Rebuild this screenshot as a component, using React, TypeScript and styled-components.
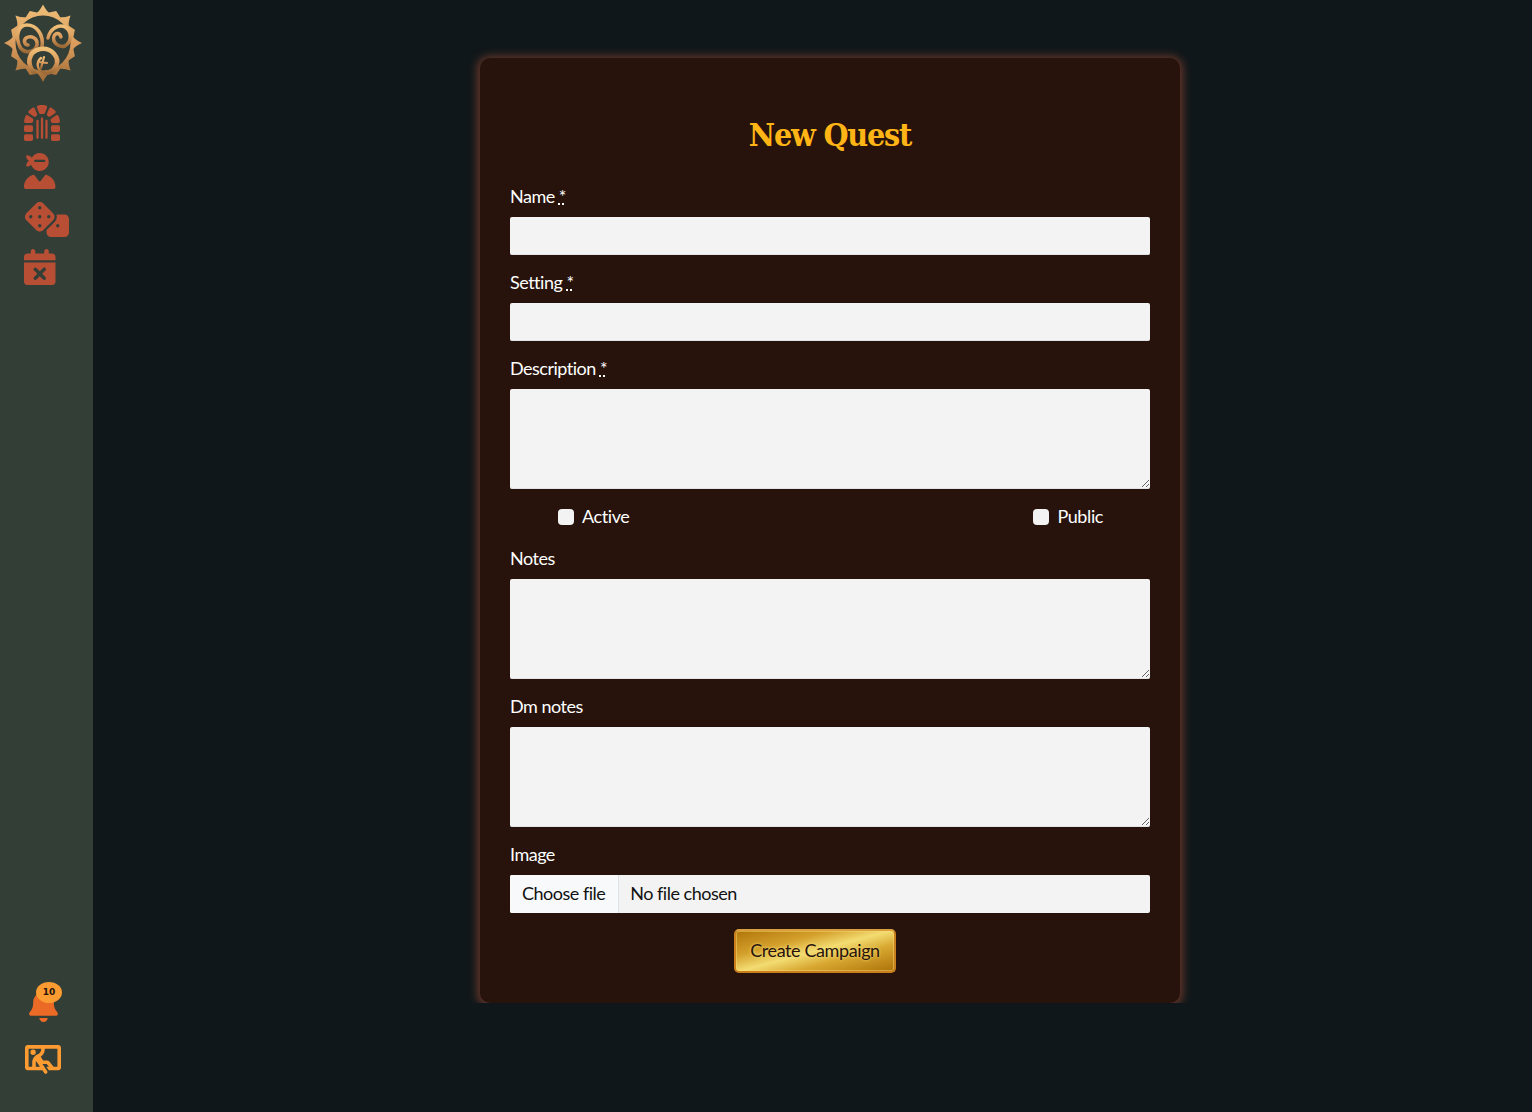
import React from 'react'
import styled, { createGlobalStyle } from 'styled-components'
import { FaBell, FaCalendarXmark, FaDice, FaDungeon, FaPersonThroughWindow, FaUserNinja } from 'react-icons/fa6'

const GlobalStyle = createGlobalStyle`
  html, body {
    margin: 0;
    padding: 0;
    background: #10171a;
    font-family: Lato, "Open Sans", sans-serif;
  }
  * {
    box-sizing: border-box;
  }
`

const Shell = styled.div`
  display: flex;
  height: 1112px;
  overflow: hidden;
`

const Sidebar = styled.nav`
  flex: 0 0 93px;
  display: flex;
  flex-direction: column;
  justify-content: space-between;
  background: #333e37;
  padding-bottom: 38px;
`

const SideTop = styled.div`
  display: flex;
  flex-direction: column;
`

const LogoMark = styled.svg`
  display: block;
  width: 85px;
  height: 85px;
  margin-bottom: 20px;
`

const IconStack = styled.div`
  display: flex;
  flex-direction: column;
  align-items: flex-start;
  gap: 12px;
  padding-left: 24px;
  color: #b84f35;
`

const DungeonIcon = styled(FaDungeon)`
  display: block;
  width: 36px;
  height: 36px;
`

const NinjaIcon = styled(FaUserNinja)`
  display: block;
  width: 31.5px;
  height: 36px;
`

const DiceIcon = styled(FaDice)`
  display: block;
  width: 45px;
  height: 36px;
`

const CalendarIcon = styled(FaCalendarXmark)`
  display: block;
  width: 31.5px;
  height: 36px;
`

const SideBottom = styled.div`
  display: flex;
  flex-direction: column;
  align-items: flex-start;
  padding-left: 25px;
  gap: 23px;
  color: #fb9b32;
`

const BellWrap = styled.div`
  position: relative;
  margin-left: 4px;
  height: 33px;
  color: #ea6a26;

  svg {
    display: block;
    width: 29px;
    height: 33px;
  }
`

const Badge = styled.span`
  position: absolute;
  left: 7px;
  top: -7px;
  width: 26px;
  height: 21px;
  border-radius: 50%;
  background: #fb9b32;
  color: #28120b;
  font: 700 9px/21px "DejaVu Sans", sans-serif;
  text-align: center;
`

const WindowIcon = styled(FaPersonThroughWindow)`
  display: block;
  width: 36px;
  height: 29px;
`

const Main = styled.main`
  flex: 1;
  display: flex;
  align-items: flex-start;
  padding-left: 367px;
`

const CardClip = styled.div`
  overflow: hidden;
  padding: 58px 20px 0;
  height: 1003px;
`

const Card = styled.section`
  width: 700px;
  height: 945px;
  padding: 57px 30px 0;
  background: #27130b;
  border-radius: 10px;
  box-shadow: 0 1px 9px 3px #643629;
`

const Title = styled.h1`
  margin: 0;
  height: 40px;
  color: #ffb515;
  font: 700 32px/40px "DejaVu Serif Condensed", "DejaVu Serif", serif;
  letter-spacing: -1.2px;
  text-align: center;
`

const Form = styled.form`
  display: flex;
  flex-direction: column;
  margin-top: 32px;
`

const Label = styled.label`
  display: block;
  height: 20px;
  margin-bottom: 10px;
  color: #fff;
  font-size: 18px;
  line-height: 18px;
  letter-spacing: -0.5px;
`

const Field = styled.div`
  margin-bottom: 18px;
`

const TextInput = styled.input`
  display: block;
  width: 100%;
  height: 38px;
  border: 0;
  border-bottom: 1px solid #dfe3e8;
  border-radius: 2px;
  background: #f3f3f3;
`

const TextArea = styled.textarea`
  display: block;
  width: 100%;
  height: 100px;
  border: 0;
  border-bottom: 1px solid #dfe3e8;
  border-radius: 2px;
  background: #f3f3f3;
`

const FileRow = styled.label`
  display: flex;
  align-items: center;
  height: 38px;
  border-radius: 2px;
  overflow: hidden;
  background: #f3f3f3;
  color: #111;
  font-size: 18px;
  letter-spacing: -0.5px;

  input {
    display: none;
  }
`

const FileButton = styled.span`
  display: flex;
  align-items: center;
  height: 100%;
  padding: 0 13px 2px 12px;
  border-right: 1px solid #dfe3e8;
  background: #f7f9fb;
`

const FileName = styled.span`
  margin-left: 11px;
  padding-bottom: 2px;
`

const CheckRow = styled.div`
  display: flex;
  justify-content: space-between;
  align-items: center;
  height: 24px;
  margin: -3px 0 21px;
  padding: 0 47px 0 48px;
`

const CheckLabel = styled.label`
  display: flex;
  align-items: center;
  gap: 8px;
  color: #fff;
  font-size: 18px;
  letter-spacing: -0.4px;
`

const CheckBox = styled.input`
  appearance: none;
  width: 16px;
  height: 16px;
  margin: 2px 0 0;
  border-radius: 4px;
  background: #f3f3f3;
`

const SubmitButton = styled.button`
  align-self: flex-start;
  width: 162px;
  height: 44px;
  margin: -2px 0 0 224px;
  padding: 0 0 2px;
  border: 2px solid #c9801c;
  border-top-color: #d9a040;
  border-radius: 5px;
  background: linear-gradient(165deg, #b0750a 0%, #d4a02c 30%, #f3dc72 50%, #d8a832 68%, #ad7208 100%);
  box-shadow: inset 0 0 0 1px rgba(255, 220, 120, 0.45);
  color: #28120b;
  font-family: Lato, sans-serif;
  font-size: 18px;
  letter-spacing: -0.4px;
  text-shadow: 0 0 3px #f6e27a;
`

const required = <abbr title="required">*</abbr>

// sun rim: concave spikes round the ring, the top and diagonal ones longer
const rimPath = () => {
  const n = 16
  const cx = 43
  const cy = 43
  const at = (deg: number, r: number) => {
    const a = ((deg - 90) * Math.PI) / 180
    return `${(cx + r * Math.cos(a)).toFixed(1)} ${(cy + r * Math.sin(a)).toFixed(1)}`
  }
  const step = 360 / n
  let d = `M${at(-step / 2, 31)}`
  for (let i = 0; i < n; i++) {
    const tip = i === 0 ? 38.5 : i % 2 === 0 ? 39 : 34.5
    const deg = i * step
    d += `Q${at(deg - step / 4, 32.5)} ${at(deg, tip)}`
    d += `Q${at(deg + step / 4, 32.5)} ${at(deg + step / 2, 31)}`
  }
  return `${d}Z`
}

const Logo = () => (
  <LogoMark viewBox="0 0 85 85" aria-label="logo">
    <defs>
      <linearGradient id="bronze" x1="0" y1="0" x2="0" y2="1">
        <stop offset="0" stopColor="#efbf78" />
        <stop offset="0.55" stopColor="#d8995a" />
        <stop offset="1" stopColor="#9c6a36" />
      </linearGradient>
    </defs>
    <path d={rimPath()} fill="url(#bronze)" />
    <circle cx="43" cy="43" r="27.5" fill="#333e37" />
    <g fill="none" stroke="url(#bronze)" strokeLinecap="round" strokeLinejoin="round">
      <path d="M42 47C44 34 36 25 27 25C18 25 15 36 20 47C24 54 35 53 37 45C38 38 31 35 26 38C23 41 25 45 28 45" strokeWidth="3.6" />
      <path d="M48 38C50 29 58 24 65 27C72 31 72 42 65 46C58 48 52 42 54 36C56 32 60 33 61 37" strokeWidth="3.4" />
      <path d="M34 72C27 65 27 52 40 49C52 47 60 58 56 66C53 72 48 73 45 73" strokeWidth="4.6" />
      <path d="M42 72C37 69 36 62 41 58" strokeWidth="2.4" />
      <path d="M44 57L41 68M38 62L47 63" strokeWidth="2.2" />
    </g>
  </LogoMark>
)

const App: React.FC = () => {
  return (
    <Shell>
      <GlobalStyle />
      <Sidebar>
        <SideTop>
          <Logo />
          <IconStack>
            <DungeonIcon />
            <NinjaIcon />
            <DiceIcon />
            <CalendarIcon />
          </IconStack>
        </SideTop>
        <SideBottom>
          <BellWrap>
            <FaBell />
            <Badge>10</Badge>
          </BellWrap>
          <WindowIcon />
        </SideBottom>
      </Sidebar>
      <Main>
        <CardClip>
          <Card>
            <Title>New Quest</Title>
            <Form>
              <Field>
                <Label>Name {required}</Label>
                <TextInput type="text" />
              </Field>
              <Field>
                <Label>Setting {required}</Label>
                <TextInput type="text" />
              </Field>
              <Field>
                <Label>Description {required}</Label>
                <TextArea />
              </Field>
              <CheckRow>
                <CheckLabel>
                  <CheckBox type="checkbox" />
                  Active
                </CheckLabel>
                <CheckLabel>
                  <CheckBox type="checkbox" />
                  Public
                </CheckLabel>
              </CheckRow>
              <Field>
                <Label>Notes</Label>
                <TextArea />
              </Field>
              <Field>
                <Label>Dm notes</Label>
                <TextArea />
              </Field>
              <Field>
                <Label>Image</Label>
                <FileRow>
                  <input type="file" />
                  <FileButton>Choose file</FileButton>
                  <FileName>No file chosen</FileName>
                </FileRow>
              </Field>
              <SubmitButton type="button">Create Campaign</SubmitButton>
            </Form>
          </Card>
        </CardClip>
      </Main>
    </Shell>
  )
}

export default App
